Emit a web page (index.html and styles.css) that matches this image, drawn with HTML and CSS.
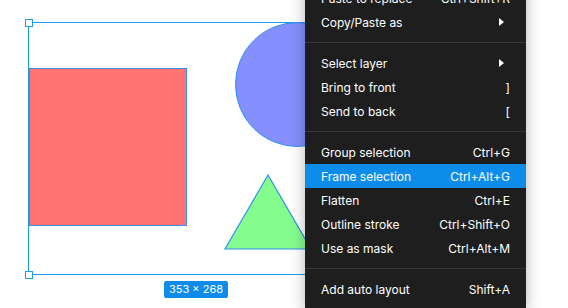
FILE: index.html
```html
<!DOCTYPE html>
<html lang="en">
<head>
    <meta charset="UTF-8" />
    <meta name="viewport" content="width=device-width, initial-scale=1.0" />
    <link rel="stylesheet" href="styles.css">
</head>
<body>
    <main class="canvas">
        <div class="frame">
            <span class="handle handle--tl"></span>
            <span class="handle handle--bl"></span>
        </div>
        <div class="shape shape--square"></div>
        <div class="shape shape--circle"></div>
        <svg class="shape shape--triangle" width="90" height="78" viewBox="0 0 90 78">
            <polygon points="45,1 2,75 88,75" fill="#85fd8e" stroke="#2f8ff0" stroke-width="1.2" />
        </svg>
        <div class="size-label">353 × 268</div>

        <nav class="menu">
            <ul class="menu__group">
                <li class="menu__item"><span>Paste to replace</span><span class="shortcut">Ctrl+Shift+R</span></li>
                <li class="menu__item"><span>Copy/Paste as</span><span class="arrow"></span></li>
            </ul>
            <ul class="menu__group">
                <li class="menu__item"><span>Select layer</span><span class="arrow"></span></li>
                <li class="menu__item"><span>Bring to front</span><span class="shortcut">]</span></li>
                <li class="menu__item"><span>Send to back</span><span class="shortcut">[</span></li>
            </ul>
            <ul class="menu__group">
                <li class="menu__item"><span>Group selection</span><span class="shortcut">Ctrl+G</span></li>
                <li class="menu__item menu__item--active"><span>Frame selection</span><span class="shortcut">Ctrl+Alt+G</span></li>
                <li class="menu__item"><span>Flatten</span><span class="shortcut">Ctrl+E</span></li>
                <li class="menu__item"><span>Outline stroke</span><span class="shortcut">Ctrl+Shift+O</span></li>
                <li class="menu__item"><span>Use as mask</span><span class="shortcut">Ctrl+Alt+M</span></li>
            </ul>
            <ul class="menu__group">
                <li class="menu__item"><span>Add auto layout</span><span class="shortcut">Shift+A</span></li>
            </ul>
        </nav>
    </main>
</body>
</html>
```

FILE: styles.css
```css
html, body {
    margin: 0;
    padding: 0;
    font-family: 'Inter', sans-serif;
    font-size: 12px;
}
* {
    box-sizing: border-box;
}
body {
    background-color: #fff;
    overflow: hidden;
}
.canvas {
    position: relative;
    width: 568px;
    height: 308px;
    overflow: hidden;
}
.frame {
    position: absolute;
    left: 28px;
    top: 22px;
    width: 353px;
    height: 253px;
    border: 1px solid #1a9bf0;
}
.handle {
    position: absolute;
    left: -4px;
    width: 8px;
    height: 8px;
    background-color: #fff;
    border: 1px solid #1a9bf0;
}
.handle--tl {
    top: -4px;
}
.handle--bl {
    bottom: -5px;
}
.shape {
    position: absolute;
}
.shape--square {
    left: 29px;
    top: 68px;
    width: 158px;
    height: 158px;
    background-color: #ff7373;
    border: 1px solid #3b8ee6;
}
.shape--circle {
    left: 235px;
    top: 22px;
    width: 125px;
    height: 125px;
    border-radius: 50%;
    background-color: #8590fe;
    border: 1px solid #2f8ff0;
}
.shape--triangle {
    left: 223px;
    top: 174px;
}
.size-label {
    position: absolute;
    left: 164px;
    top: 281px;
    height: 17px;
    padding: 0 5px;
    border-radius: 2px;
    background-color: #0d8ce9;
    color: #fff;
    font-size: 11px;
    line-height: 17px;
}
.menu {
    position: absolute;
    left: 305px;
    top: -22px;
    width: 221px;
    padding: 8px 0;
    background-color: #1e1e1e;
    color: #fff;
    box-shadow: 0 2px 14px rgba(0, 0, 0, 0.3);
}
.menu__group {
    list-style: none;
    margin: 0;
    padding: 8px 0;
    border-bottom: 1px solid #383838;
}
.menu__group:first-child {
    padding-top: 0;
}
.menu__group:last-child {
    border-bottom: none;
    padding-bottom: 0;
}
.menu__item {
    display: flex;
    align-items: center;
    justify-content: space-between;
    height: 24px;
    padding: 0 16px;
}
.menu__item--active {
    background-color: #0d8ce9;
}
.arrow {
    width: 0;
    height: 0;
    margin-right: 6px;
    border-top: 4px solid transparent;
    border-bottom: 4px solid transparent;
    border-left: 5px solid #fff;
}
```
